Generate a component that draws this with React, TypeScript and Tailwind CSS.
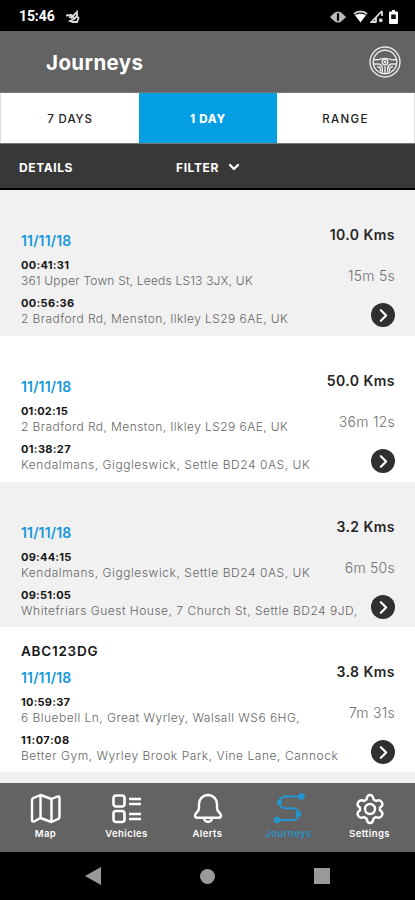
import { ChevronDown, ChevronRight } from 'lucide-react'
import type { ReactNode } from 'react'

interface Stop {
  time: string
  address: string
  timeClass: string
  addressClass: string
}

interface Journey {
  plate?: string
  distance: string
  duration: string
  rowClass: string
  stops: Stop[]
}

const journeys: Journey[] = [
  {
    distance: '10.0 Kms',
    duration: '15m 5s',
    rowClass: 'h-[146px] bg-[#f1f1f1]',
    stops: [
      { time: '00:41:31', address: '361 Upper Town St, Leeds LS13 3JX, UK', timeClass: 'tracking-[0.3px]', addressClass: 'tracking-[0.19px]' },
      { time: '00:56:36', address: '2 Bradford Rd, Menston, Ilkley LS29 6AE, UK', timeClass: 'tracking-[0.35px]', addressClass: 'tracking-[0.42px]' },
    ],
  },
  {
    distance: '50.0 Kms',
    duration: '36m 12s',
    rowClass: 'h-[146px] bg-white',
    stops: [
      { time: '01:02:15', address: '2 Bradford Rd, Menston, Ilkley LS29 6AE, UK', timeClass: 'tracking-[0.15px]', addressClass: 'tracking-[0.42px]' },
      { time: '01:38:27', address: 'Kendalmans, Giggleswick, Settle BD24 0AS, UK', timeClass: 'tracking-[0.35px]', addressClass: 'tracking-[0.55px]' },
    ],
  },
  {
    distance: '3.2 Kms',
    duration: '6m 50s',
    rowClass: 'h-[145px] bg-[#f1f1f1]',
    stops: [
      { time: '09:44:15', address: 'Kendalmans, Giggleswick, Settle BD24 0AS, UK', timeClass: 'tracking-[0.25px]', addressClass: 'tracking-[0.55px]' },
      { time: '09:51:05', address: 'Whitefriars Guest House, 7 Church St, Settle BD24 9JD,', timeClass: 'tracking-[0.25px]', addressClass: 'tracking-[0.5px]' },
    ],
  },
  {
    plate: 'ABC123DG',
    distance: '3.8 Kms',
    duration: '7m 31s',
    rowClass: 'h-[145px] bg-white',
    stops: [
      { time: '10:59:37', address: '6 Bluebell Ln, Great Wyrley, Walsall WS6 6HG,', timeClass: 'tracking-[0.25px]', addressClass: 'tracking-[0.47px]' },
      { time: '11:07:08', address: 'Better Gym, Wyrley Brook Park, Vine Lane, Cannock', timeClass: 'tracking-[0.5px]', addressClass: 'tracking-[0.54px]' },
    ],
  },
]

const StatusBar = () => (
  <div className="flex h-[31px] shrink-0 items-center bg-black pt-[2px] pr-[17px] pl-[19px] text-white">
    <span className="font-[Roboto] text-[14px] font-bold tracking-[-0.1px]">15:46</span>
    <svg className="ml-[11px]" width="15" height="14" viewBox="0 0 15 14" fill="none" stroke="#ddd" strokeWidth="1.8">
      <path d="M0 5.500 5 5l1 2 5-5v4.500l1.500 1.500-1.500 4H7l-3-1 4-2M6 5l2 4 3-3M3 7l3 1" />
    </svg>
    <div className="ml-auto flex items-center">
      <svg width="16" height="12" viewBox="0 0 16 12">
        <path d="M3.500 2.500 0 6l3.500 3.500zM12.500 2.500 16 6l-3.500 3.500z" fill="#bbb" />
        <circle cx="8" cy="6" r="5.500" fill="#bbb" />
        <path d="M8 3v6" stroke="#000" strokeWidth="2.200" strokeLinecap="round" />
      </svg>
      <svg className="ml-[7px]" width="15" height="13" viewBox="0 0 15 13">
        <path d="M1 4C4.500.5 10.500.5 14 4" fill="none" stroke="#ccc" strokeWidth="2" />
        <path d="M2 5.300c3-2 8-2 11 0L7.500 12.500z" fill="#fff" />
      </svg>
      <svg className="ml-[2px]" width="13" height="13" viewBox="0 0 13 13" fill="none" stroke="#ddd" strokeWidth="1.800">
        <path d="M12 1v5M12 1 1.500 12h5M6 7v5" />
        <rect x="10" y="9.500" width="1.500" height="1.500" fill="#fff" />
      </svg>
      <svg className="ml-[6px]" width="9" height="14" viewBox="0 0 9 14">
        <path d="M3 0h3v1.500h2q1 0 1 1V13q0 1-1 1H1q-1 0-1-1V2.500q0-1 1-1h2z" fill="#fff" />
        <path d="M2.200 4.500h4.600V9H2.200z" fill="#111" />
      </svg>
    </div>
  </div>
)

const SteeringWheel = () => (
  <svg width="32" height="32" viewBox="0 0 32 32" fill="none" stroke="#e8e8e8" strokeWidth="1.400">
    <circle cx="16" cy="16" r="15" />
    <circle cx="16" cy="16" r="11.800" />
    <path d="M5 13.500c3 .8 5 .2 7.500-.6 2.300-.7 4.700-.7 7 0 2.500.8 4.500 1.400 7.500.6" />
    <circle cx="16" cy="16" r="2.800" />
    <circle cx="16" cy="16" r=".6" />
    <path d="M4.500 18h5.500c2 .8 3.300 2.300 3.300 4.500v5M27.500 18H22c-2 .8-3.300 2.300-3.300 4.500v5M16 20v7.500M8 20.500l3 1 .5 4M24 20.500l-3 1-.5 4" />
  </svg>
)

const Header = () => (
  <div className="flex h-[61px] shrink-0 items-center justify-between bg-[#636363] pr-[14px] pl-[46px]">
    <h1 className="pt-[3px] text-[20.5px] font-bold tracking-[0.4px] text-white">Journeys</h1>
    <SteeringWheel />
  </div>
)

const Tabs = () => (
  <div className="flex h-[52px] shrink-0 border-y border-[#777] bg-white text-[11.5px] text-[#222]">
    <button className="w-[139px] border-l border-[#ddd] pt-[3px] font-medium tracking-[0.9px]">7 DAYS</button>
    <button className="w-[138px] bg-[#049fe3] pt-[3px] font-extrabold tracking-[0.8px] text-white">1 DAY</button>
    <button className="flex-1 border-r border-[#ddd] pt-[3px] font-medium tracking-[1.3px]">RANGE</button>
  </div>
)

const FilterBar = () => (
  <div className="flex h-[46px] shrink-0 items-center border-b-2 border-black bg-[#383838] pt-[3px] pl-[19px] text-[12px] font-bold tracking-[0.6px] text-white">
    <span className="w-[157px]">DETAILS</span>
    <span>FILTER</span>
    <ChevronDown size={16} strokeWidth={3.5} className="mb-[2px] ml-[7px]" />
  </div>
)

const JourneyRow = ({ journey }: { journey: Journey }) => (
  <div className={`flex shrink-0 justify-between pr-[20px] pl-[21px] ${journey.rowClass}`}>
    <div className="pt-[14px] whitespace-nowrap">
      <div className="h-[27px] text-[13.5px] leading-[20px] font-semibold tracking-[0.75px] text-[#161616]">{journey.plate}</div>
      <div className="mb-[6px] text-[14px] leading-[20px] font-semibold tracking-[0.15px] text-[#1597db]">11/11/18</div>
      {journey.stops.map((stop) => (
        <div key={stop.time} className="mb-[6px]">
          <div className={`text-[11px] leading-[16px] font-bold text-[#161616] ${stop.timeClass}`}>{stop.time}</div>
          <div className={`text-[12px] leading-[16px] font-light text-[#666] ${stop.addressClass}`}>{stop.address}</div>
        </div>
      ))}
    </div>
    <div className="flex w-0 flex-col items-end whitespace-nowrap">
      <div className="pt-[35px] text-[14px] leading-[20px] font-semibold tracking-[0.45px] text-[#252525]">{journey.distance}</div>
      <div className="pt-[21px] text-[14px] leading-[20px] font-light tracking-[0.25px] text-[#707070]">{journey.duration}</div>
      <button className="mt-[17px] flex size-[24px] shrink-0 items-center justify-center rounded-full bg-[#303030] text-white">
        <ChevronRight size={21} strokeWidth={2.5} />
      </button>
    </div>
  </div>
)

const NavItem = ({ label, active, children }: { label: string; active?: boolean; children: ReactNode }) => (
  <button className={`flex w-[81px] flex-col items-center pt-[10px] ${active ? 'text-[#2198d3]' : 'text-white'}`}>
    <svg width="32" height="32" viewBox="0 0 32 32" fill="none" stroke="currentColor" strokeWidth="2.400" strokeLinejoin="round" strokeLinecap="round">
      {children}
    </svg>
    <span className={`mt-[1px] text-[9.5px] leading-[15px] ${active ? 'font-medium tracking-[0.5px]' : 'font-semibold tracking-[0.4px]'}`}>{label}</span>
  </button>
)

const BottomNav = () => (
  <div className="flex h-[69px] shrink-0 bg-[#636363] pl-[5px]">
    <NavItem label="Map">
      <path d="M2 7q0-1.500 1.500-2L10.500 2l11 4 6-2.500q2-.7 2 1.500v19q0 1.500-1.500 2L21.500 29l-11-4-6.500 3.500Q2 29 2 27zM10.500 2v23M21.500 6v23" />
    </NavItem>
    <NavItem label="Vehicles">
      <g strokeWidth="2.600">
        <rect x="2.500" y="2.500" width="11" height="11" rx="2.500" />
        <rect x="2.500" y="18" width="11" height="11" rx="2.500" />
      </g>
      <path d="M18 6h12M18 11h12M18 21h12M18 26h12" strokeLinecap="butt" />
    </NavItem>
    <NavItem label="Alerts">
      <path d="M16 2a9 9 0 0 0-9 9v4c0 4-4 5-4 7.500 0 1.500 1 2.200 2 2.200h22c1 0 2-.7 2-2.200 0-2.500-4-3.500-4-7.500v-4a9 9 0 0 0-9-9zM12 25c0 5 8 5 8 0" />
    </NavItem>
    <NavItem label="Journeys" active>
      <path d="M27 3.500H12a5.850 5.850 0 0 0 0 11.700h8a5.850 5.850 0 0 1 0 11.700H5" strokeWidth="2" />
      <circle cx="28.500" cy="3.500" r="2" fill="currentColor" />
      <circle cx="4" cy="27" r="2" />
      <circle cx="6.500" cy="9" r="1.300" fill="currentColor" />
      <circle cx="25.500" cy="21" r="1.500" fill="currentColor" />
    </NavItem>
    <NavItem label="Settings">
      <path d="M12.500 6.500Q13 2 16 2t3.500 4.500l2.500 1.500q4-2 6 1.500 1.500 3-2 5v3q3.500 2 2 5-2 3.500-6 1.500l-2.500 1.500q-.5 4.500-3.500 4.500t-3.500-4.500L10 24q-4 2-6-1.500-1.500-3 2-5v-3q-3.500-2-2-5Q6 6 10 8z" />
      <circle cx="16" cy="16" r="5" />
    </NavItem>
  </div>
)

const SystemBar = () => (
  <div className="flex h-[48px] shrink-0 items-center justify-between bg-black px-[85px]">
    <svg width="16" height="18" viewBox="0 0 16 18" fill="#999">
      <path d="m0 9 16-9v18z" />
    </svg>
    <span className="size-[15px] rounded-full bg-[#999]" />
    <span className="size-[16px] bg-[#999]" />
  </div>
)

export default function App() {
  return (
    <div className="flex h-[900px] w-[415px] flex-col overflow-hidden bg-[#f1f1f1] font-[Inter,sans-serif]">
      <StatusBar />
      <Header />
      <Tabs />
      <FilterBar />
      <div className="flex h-[593px] shrink-0 flex-col">
        {journeys.map((journey) => (
          <JourneyRow key={journey.distance} journey={journey} />
        ))}
      </div>
      <BottomNav />
      <SystemBar />
    </div>
  )
}
